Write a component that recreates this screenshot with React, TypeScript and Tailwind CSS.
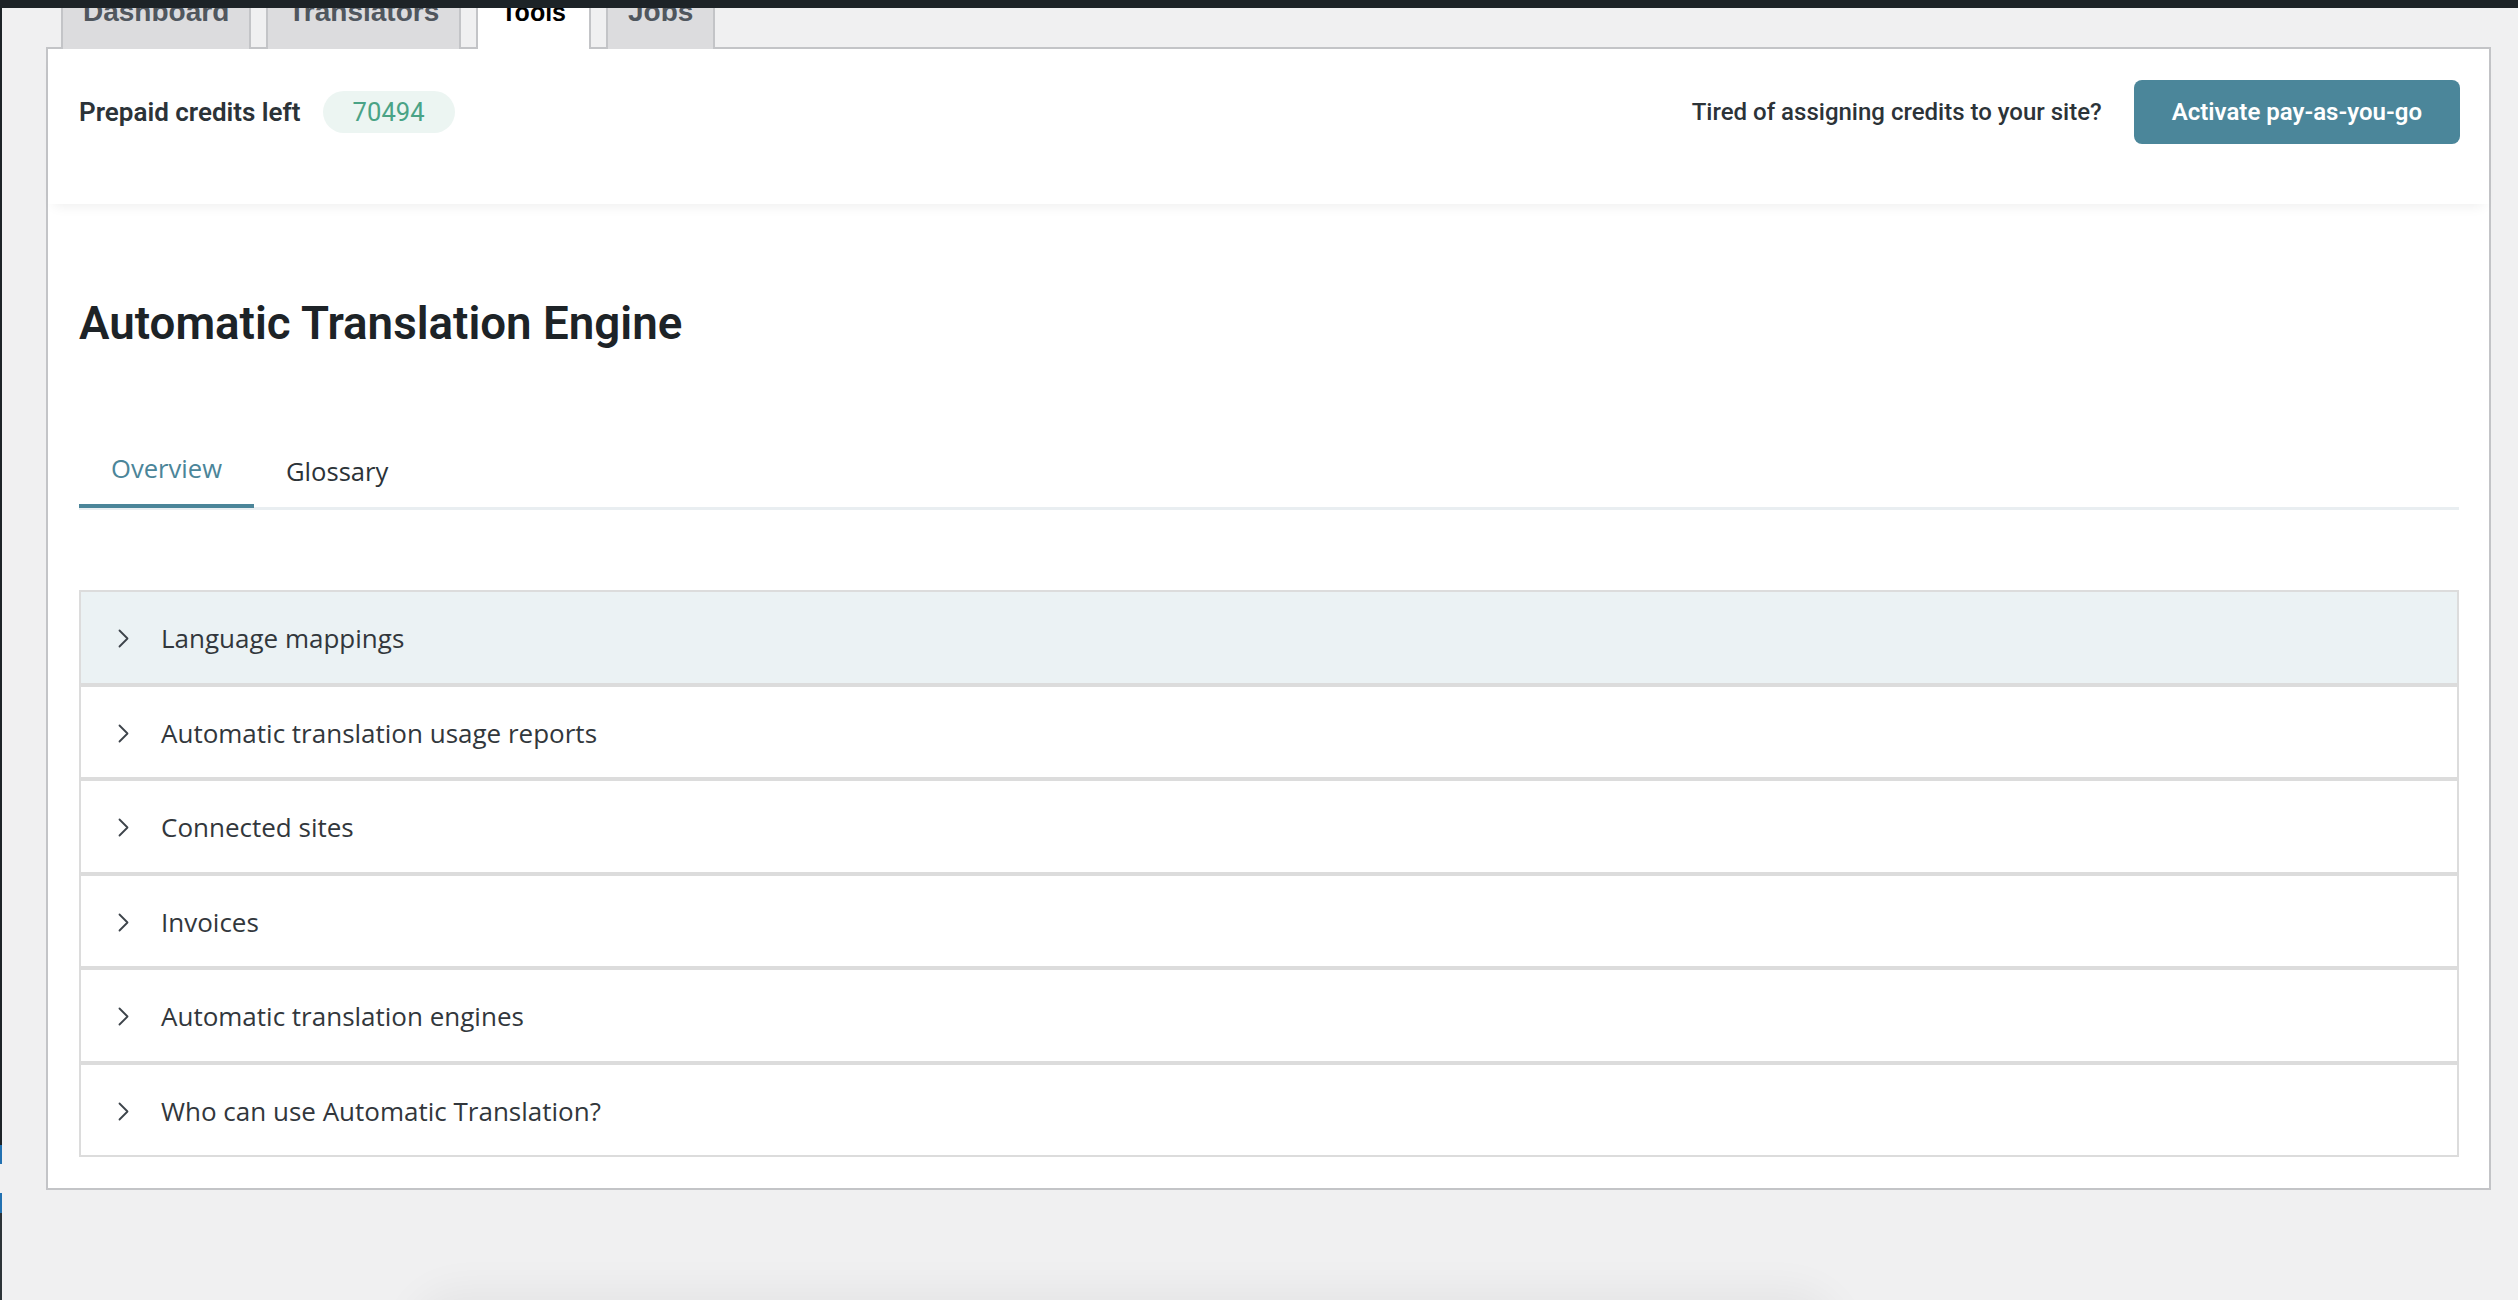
import React from 'react'

const NAV_TABS = [
  { key: 'dashboard', label: 'Dashboard' },
  { key: 'translators', label: 'Translators' },
  { key: 'tools', label: 'Tools' },
  { key: 'jobs', label: 'Jobs' },
]

const SECTIONS = [
  'Language mappings',
  'Automatic translation usage reports',
  'Connected sites',
  'Invoices',
  'Automatic translation engines',
  'Who can use Automatic Translation?',
]

function Chevron() {
  return (
    <svg width="11" height="19" viewBox="0 0 11 19" fill="none" className="shrink-0">
      <path d="M1.5 1.5 L9.5 9.5 L1.5 17.5" stroke="#3c434a" strokeWidth="1.8" strokeLinecap="round" strokeLinejoin="round" />
    </svg>
  )
}

export default function App() {
  const activeTab = 'tools'
  const activeSubTab = 'overview'

  return (
    <div className="h-screen overflow-hidden bg-[#f0f0f1] flex flex-col">
      {/* admin bar */}
      <div className="h-[8px] shrink-0 bg-[#1d2327]" />

      <div className="flex flex-1 min-h-0">
        {/* admin menu edge */}
        <div className="w-[2px] shrink-0 flex flex-col">
          <div className="h-[1137px] bg-[#1d2327]" />
          <div className="h-[19px] bg-[#2271b1]" />
          <div className="h-[29px] bg-[#f0f0f1]" />
          <div className="h-[20px] bg-[#2271b1]" />
          <div className="flex-1 bg-[#2c3338]" />
        </div>

        <div className="flex-1 min-w-0 pl-[44px] pr-[27px]">
          {/* nav tabs */}
          <div className="h-[41px] overflow-hidden flex items-end gap-[15px] pl-[15px] font-['Liberation_Sans',Arial,sans-serif] font-bold">
            {NAV_TABS.map((t) => {
              const isActive = t.key === activeTab
              return (
                <div
                  key={t.key}
                  className={
                    isActive
                      ? 'relative bg-white border-2 border-b-0 border-[#c3c4c7] px-[23px] pt-[20px] pb-[19px] text-[25px] leading-[36px] text-black'
                      : 'bg-[#dcdcde] border-2 border-b-0 border-[#c3c4c7] px-[20px] pt-[20px] pb-[19px] text-[28px] leading-[36px] text-[#50575e]'
                  }
                >
                  {t.label}
                </div>
              )
            })}
          </div>

          {/* panel */}
          <div className="-mt-[2px] border-2 border-[#c3c4c7] bg-white">
            <div className="relative flex items-center justify-between pl-[31px] pr-[29px] pt-[31px] pb-[60px] bg-white shadow-[0_8px_12px_-6px_rgba(0,0,0,0.07)] font-['Roboto',sans-serif]">
              <div className="flex items-center gap-[22px]">
                <span className="text-[26px] font-semibold text-[#2c3338]">Prepaid credits left</span>
                <span className="h-[42px] w-[132px] rounded-full bg-[#ecf5f2] flex items-center justify-center text-[25.6px] text-[#4aa386]">
                  70494
                </span>
              </div>
              <div className="flex items-center gap-[32px]">
                <span className="text-[24px] font-medium text-[#2c3338]">Tired of assigning credits to your site?</span>
                <button className="h-[64px] px-[38px] rounded-[8px] bg-[#4b869a] text-white text-[24px] font-semibold">
                  Activate pay-as-you-go
                </button>
              </div>
            </div>

            <div className="pl-[31px] pr-[30px] pt-[92px] pb-[31px]">
              <h1 className="font-['Roboto',sans-serif] text-[45.7px] leading-[55px] font-semibold text-[#1d2327]">
                Automatic Translation Engine
              </h1>

              {/* sub tabs */}
              <div className="mt-[88px] flex items-end border-b-[3px] border-[#e9eef1] font-['Open_Sans',sans-serif] text-[25.6px] leading-[36px]">
                <div
                  className={
                    activeSubTab === 'overview'
                      ? 'px-[32px] pt-[12px] pb-[17px] border-b-4 border-[#4b8599] -mb-[1px] text-[#4b8599]'
                      : 'px-[32px] pt-[12px] pb-[17px] text-[#2c3338]'
                  }
                >
                  Overview
                </div>
                <div className="px-[32px] pt-[12px] pb-[17px] text-[#2c3338]">Glossary</div>
              </div>

              {/* accordion */}
              <div className="mt-[80px] flex flex-col font-['Open_Sans',sans-serif]">
                {SECTIONS.map((s, i) => (
                  <div
                    key={s}
                    className={
                      'h-[94.5px] border-2 border-[#dcdcdc] flex items-center gap-[32px] pl-[37px] pt-[3px] text-[26px] text-[#32373c] ' +
                      (i === 0 ? 'bg-[#ebf2f4]' : 'bg-white')
                    }
                  >
                    <Chevron />
                    <span>{s}</span>
                  </div>
                ))}
              </div>
            </div>
          </div>

          {/* faint shadow of something below the fold */}
          <div className="mt-[110px] ml-[374px] w-[1410px] h-[80px] rounded-[40px] bg-[#f0f0f1] shadow-[0_0_40px_10px_rgba(0,0,0,0.05)]" />
        </div>
      </div>
    </div>
  )
}
